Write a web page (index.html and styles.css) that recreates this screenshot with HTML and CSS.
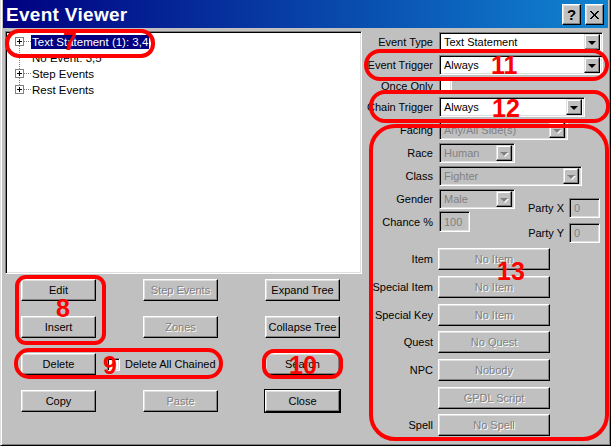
FILE: index.html
```html
<!DOCTYPE html>
<html lang="en">
  <head>
    <meta charset="UTF-8" />
    <title>Event Viewer</title>
    <link rel="stylesheet" href="styles.css">
  </head>
  <body>
    <div class="window">
      <div class="titlebar">
        <span class="title">Event Viewer</span>
        <div class="caption-btns">
          <span class="cap">?</span>
          <span class="cap">
            <svg width="9" height="8" viewBox="0 0 9 8" shape-rendering="crispEdges">
              <path d="M0 0h2v1h-2zM7 0h2v1h-2zM1 1h2v1h-2zM6 1h2v1h-2zM2 2h2v1h-2zM5 2h2v1h-2zM3 3h3v1h-3zM3 4h3v1h-3zM2 5h2v1h-2zM5 5h2v1h-2zM1 6h2v1h-2zM6 6h2v1h-2zM0 7h2v1h-2zM7 7h2v1h-2z" fill="#000"/>
            </svg>
          </span>
        </div>
      </div>

      <div class="content">
        <div class="left">
          <div class="tree">
            <div class="node">
              <svg width="23" height="16" shape-rendering="crispEdges">
                <path d="M11.5 12v4M16 7.5h7" stroke="#808080" stroke-dasharray="1 1"/>
                <rect x="7.5" y="3.5" width="8" height="8" fill="#fff" stroke="#808080"/>
                <path d="M9 7.5h5M11.5 5v5" stroke="#000"/>
              </svg>
              <span class="label selected">Text Statement (1): 3,4</span>
            </div>
            <div class="node">
              <svg width="23" height="16" shape-rendering="crispEdges">
                <path d="M11.5 0v16M12 7.5h11" stroke="#808080" stroke-dasharray="1 1"/>
              </svg>
              <span class="label">No Event: 3,5</span>
            </div>
            <div class="node">
              <svg width="23" height="16" shape-rendering="crispEdges">
                <path d="M11.5 0v4M11.5 12v4M16 7.5h7" stroke="#808080" stroke-dasharray="1 1"/>
                <rect x="7.5" y="3.5" width="8" height="8" fill="#fff" stroke="#808080"/>
                <path d="M9 7.5h5M11.5 5v5" stroke="#000"/>
              </svg>
              <span class="label">Step Events</span>
            </div>
            <div class="node">
              <svg width="23" height="16" shape-rendering="crispEdges">
                <path d="M11.5 0v4M16 7.5h7" stroke="#808080" stroke-dasharray="1 1"/>
                <rect x="7.5" y="3.5" width="8" height="8" fill="#fff" stroke="#808080"/>
                <path d="M9 7.5h5M11.5 5v5" stroke="#000"/>
              </svg>
              <span class="label">Rest Events</span>
            </div>
          </div>

          <div class="actions">
            <span class="btn">Edit</span>
            <span class="btn disabled">Step Events</span>
            <span class="btn">Expand Tree</span>

            <span class="btn">Insert</span>
            <span class="btn disabled">Zones</span>
            <span class="btn">Collapse Tree</span>

            <div class="delete-group">
              <span class="btn">Delete</span>
              <label class="check-label"><span class="checkbox"></span>Delete All Chained</label>
            </div>
            <span class="btn">Search</span>

            <span class="btn">Copy</span>
            <span class="btn disabled">Paste</span>
            <span class="btn default">Close</span>
          </div>
        </div>

        <div class="right">
          <div class="row">
            <span class="lbl">Event Type</span>
            <div class="combo w-full"><span class="val">Text Statement</span><span class="drop"></span></div>
          </div>
          <div class="row gap3">
            <span class="lbl">Event Trigger</span>
            <div class="combo w-full"><span class="val">Always</span><span class="drop"></span></div>
          </div>
          <div class="row once">
            <span class="lbl">Once Only</span>
            <span class="checkbox"></span>
          </div>
          <div class="row">
            <span class="lbl">Chain Trigger</span>
            <div class="combo w-chain"><span class="val">Always</span><span class="drop"></span></div>
          </div>
          <div class="row gap3">
            <span class="lbl">Facing</span>
            <div class="combo disabled w-facing"><span class="val">Any/All Side(s)</span><span class="drop"></span></div>
          </div>
          <div class="row gap3">
            <span class="lbl">Race</span>
            <div class="combo disabled w-small"><span class="val">Human</span><span class="drop"></span></div>
          </div>
          <div class="row gap3">
            <span class="lbl">Class</span>
            <div class="combo disabled w-class"><span class="val">Fighter</span><span class="drop"></span></div>
          </div>

          <div class="attrs">
            <div class="attrs-left">
              <div class="row">
                <span class="lbl">Gender</span>
                <div class="combo disabled w-small"><span class="val">Male</span><span class="drop"></span></div>
              </div>
              <div class="row chance">
                <span class="lbl">Chance %</span>
                <span class="edit disabled w-chance">100</span>
              </div>
            </div>
            <div class="attrs-right">
              <div class="party">
                <span class="plbl">Party X</span>
                <span class="edit disabled w-party">0</span>
              </div>
              <div class="party party-y">
                <span class="plbl">Party Y</span>
                <span class="edit disabled w-party">0</span>
              </div>
            </div>
          </div>

          <div class="row brow first">
            <span class="lbl">Item</span>
            <span class="btn disabled w-pick">No Item</span>
          </div>
          <div class="row brow">
            <span class="lbl">Special Item</span>
            <span class="btn disabled w-pick">No Item</span>
          </div>
          <div class="row brow">
            <span class="lbl">Special Key</span>
            <span class="btn disabled w-pick">No Item</span>
          </div>
          <div class="row brow tight">
            <span class="lbl">Quest</span>
            <span class="btn disabled w-pick">No Quest</span>
          </div>
          <div class="row brow">
            <span class="lbl">NPC</span>
            <span class="btn disabled w-pick">Nobody</span>
          </div>
          <div class="row brow">
            <span class="lbl"></span>
            <span class="btn disabled w-pick">GPDL Script</span>
          </div>
          <div class="row brow tight">
            <span class="lbl">Spell</span>
            <span class="btn disabled w-pick">No Spell</span>
          </div>
        </div>
      </div>

      <!-- red callouts drawn over the dialog -->
      <div class="mark" style="left:4px;top:29px;width:150px;height:29px;border-radius:14px"></div>
      <div class="mark" style="left:14px;top:275px;width:91px;height:70px;border-radius:11px"></div>
      <div class="mark" style="left:13px;top:348px;width:209px;height:31px;border-radius:15px"></div>
      <div class="mark" style="left:261px;top:349px;width:81px;height:30px;border-radius:12px"></div>
      <div class="mark" style="left:363px;top:49px;width:245px;height:32px;border-radius:16px"></div>
      <div class="mark" style="left:368px;top:90px;width:241px;height:33px;border-radius:16px"></div>
      <div class="mark" style="left:368px;top:124px;width:240px;height:317px;border-radius:26px"></div>

      <span class="num" style="left:62px;top:29px">7</span>
      <span class="num" style="left:55px;top:296px">8</span>
      <span class="num" style="left:102px;top:353px">9</span>
      <span class="num" style="left:288px;top:353px">10</span>
      <span class="num" style="left:490px;top:53px">11</span>
      <span class="num" style="left:491px;top:96px">12</span>
      <span class="num" style="left:496px;top:259px">13</span>
    </div>
  </body>
</html>
```

FILE: styles.css
```css
* {
  margin: 0;
  padding: 0;
  box-sizing: border-box;
}

body {
  width: 611px;
  height: 446px;
  overflow: hidden;
  background: #c0c0c0;
  font-family: "Liberation Sans", Arial, sans-serif;
  font-size: 11px;
  color: #000;
}

.window {
  position: relative;
  width: 611px;
  height: 446px;
  background: #c0c0c0;
  border: 1px solid;
  border-top: 0;
  border-color: #dfdfdf #000 #000 #dfdfdf;
  box-shadow: inset 1px 0 #fff, inset -1px -1px #808080;
  padding: 0 2px 2px 2px;
}

/* Title bar */
.titlebar {
  height: 28px;
  display: flex;
  align-items: center;
  justify-content: space-between;
  background: linear-gradient(90deg, #000080 0%, #1084d0 100%);
  padding: 0 4px 0 3px;
}

.title {
  color: #fff;
  font-weight: bold;
  font-size: 19px;
  letter-spacing: 0.3px;
  padding-top: 1px;
}

.caption-btns {
  display: flex;
  gap: 4px;
  margin-top: 1px;
}

.cap {
  width: 19px;
  height: 21px;
  display: flex;
  align-items: center;
  justify-content: center;
  background: #c0c0c0;
  border: 1px solid;
  border-color: #fff #000 #000 #fff;
  box-shadow: inset -1px -1px #808080, inset 1px 1px #dfdfdf;
  font-weight: bold;
  font-size: 15px;
}

/* Layout */
.content {
  display: flex;
  height: 415px;
}

.left {
  width: 359px;
  padding: 3px 0 0 2px;
}

.right {
  flex: 1;
  padding-top: 4px;
}

/* Tree */
.tree {
  width: 357px;
  height: 243px;
  background: #fff;
  border: 1px solid;
  border-color: #808080 #fff #fff #808080;
  box-shadow: inset 1px 1px #000, inset -1px -1px #dfdfdf;
  padding: 2px 2px 0 2px;
  font-size: 11.5px;
}

.node {
  display: flex;
  align-items: center;
  height: 16px;
}

.node svg {
  display: block;
  flex: none;
}

.label {
  line-height: 14px;
  padding: 0 1px;
  white-space: nowrap;
}

.label.selected {
  background: #000080;
  color: #fff;
}

/* Buttons */
.btn {
  display: flex;
  align-items: center;
  justify-content: center;
  height: 22px;
  background: #c0c0c0;
  border: 1px solid;
  border-color: #fff #000 #000 #fff;
  box-shadow: inset -1px -1px #808080, inset 1px 1px #dfdfdf;
  white-space: nowrap;
}

.btn.disabled {
  color: #808080;
  text-shadow: 1px 1px #fff;
}

.btn.default {
  outline: 1px solid #000;
}

.actions {
  display: grid;
  grid-template-columns: 75px 75px 75px;
  grid-auto-rows: 22px;
  column-gap: 47px;
  row-gap: 15px;
  margin: 5px 0 0 16px;
}

.delete-group {
  grid-column: 1 / 3;
  display: flex;
  align-items: center;
}

.delete-group .btn {
  width: 75px;
}

.check-label {
  display: flex;
  align-items: center;
  margin-left: 11px;
  gap: 5px;
}

.checkbox {
  display: block;
  width: 13px;
  height: 13px;
  background: #fff;
  border: 1px solid;
  border-color: #808080 #fff #fff #808080;
  box-shadow: inset 1px 1px #000, inset -1px -1px #dfdfdf;
}

/* Right form */
.row {
  display: flex;
  align-items: center;
  height: 20px;
}

.gap3 {
  margin-top: 3px;
}

.lbl {
  width: 71px;
  margin-right: 6px;
  text-align: right;
  white-space: nowrap;
}

.once {
  height: 17px;
  margin-top: 2px;
  margin-bottom: 3px;
}

.combo {
  display: flex;
  align-items: center;
  height: 20px;
  background: #fff;
  border: 1px solid;
  border-color: #808080 #fff #fff #808080;
  box-shadow: inset 1px 1px #000, inset -1px -1px #dfdfdf;
  padding: 2px;
}

.combo .val {
  flex: 1;
  padding-left: 2px;
  white-space: nowrap;
  overflow: hidden;
}

.combo .drop {
  width: 16px;
  height: 16px;
  display: flex;
  align-items: center;
  justify-content: center;
  background: #c0c0c0;
  border: 1px solid;
  border-color: #dfdfdf #000 #000 #dfdfdf;
  box-shadow: inset -1px -1px #808080, inset 1px 1px #fff;
}

.combo .drop::after {
  content: "";
  border-top: 4px solid #000;
  border-left: 4px solid transparent;
  border-right: 4px solid transparent;
  margin-top: 1px;
}

.combo.disabled {
  background: #c0c0c0;
  color: #808080;
}

.combo.disabled .drop::after {
  border-top-color: #808080;
  filter: drop-shadow(1px 1px 0 #fff);
}

.w-full { width: 164px; }
.w-chain { width: 146px; }
.w-facing { width: 129px; }
.w-small { width: 76px; }
.w-class { width: 143px; }

.edit {
  display: flex;
  align-items: center;
  height: 20px;
  background: #fff;
  border: 1px solid;
  border-color: #808080 #fff #fff #808080;
  box-shadow: inset 1px 1px #000, inset -1px -1px #dfdfdf;
  padding-left: 4px;
}

.edit.disabled {
  background: #c0c0c0;
  color: #808080;
}

.w-chance { width: 31px; height: 21px; }
.w-party { width: 31px; }

.attrs {
  display: flex;
  margin-top: 3px;
}

.chance {
  height: 21px;
  margin-top: 2px;
}

.attrs-right {
  padding-top: 9px;
}

.party {
  display: flex;
  align-items: center;
  height: 20px;
}

.party-y {
  height: 21px;
  margin-top: 4px;
}

.plbl {
  width: 49px;
  text-align: right;
  margin-right: 5px;
}

.brow {
  height: 22px;
  margin-top: 6px;
}

.brow.first {
  margin-top: 5px;
}

.brow.tight {
  margin-top: 5px;
}

.brow .lbl {
  margin-right: 5px;
}

.w-pick {
  width: 112px;
}

/* Red callouts */
.mark {
  position: absolute;
  border: 4px solid #ff0000;
}

.num {
  position: absolute;
  color: #ff0000;
  font-weight: bold;
  font-size: 25px;
  line-height: 25px;
  font-family: "Liberation Sans", Arial, sans-serif;
}
```
